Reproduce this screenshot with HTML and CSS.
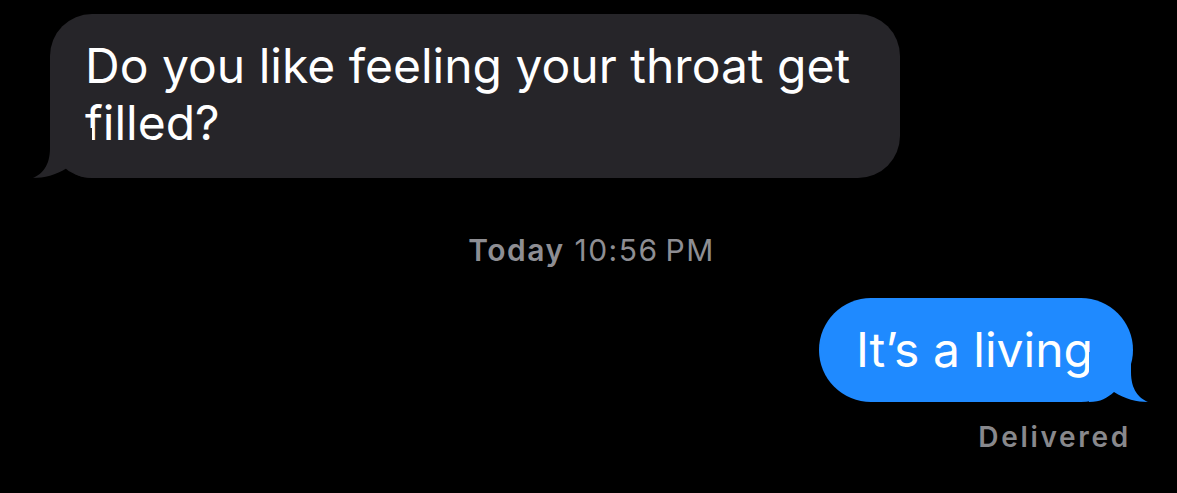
FILE: index.html
```html
<!DOCTYPE html>
<html lang="en">
<head>
  <meta charset="UTF-8" />
  <title>Messages</title>
  <link rel="stylesheet" href="styles.css">
</head>
<body>

<main class="thread">

  <!-- incoming -->
  <div class="row row--in">
    <div class="bubble bubble--in">
      Do you like feeling your throat get filled?
      <svg class="tail tail--in" width="60" height="50" viewBox="0 0 60 50">
        <path d="M18 0 L18 20 C18 38 10 46 1 50 C12 50 24 47 35 40 C42 46 48 50 60 50 L60 0 Z" />
      </svg>
    </div>
  </div>

  <div class="stamp"><span class="stamp__day">Today</span> 10:56&#8239;PM</div>

  <!-- outgoing -->
  <div class="row row--out">
    <div class="bubble bubble--out">
      It’s a living
      <svg class="tail tail--out" width="60" height="50" viewBox="0 0 60 50">
        <path d="M18 0 L18 20 C18 38 10 46 1 50 C12 50 24 47 35 40 C42 46 48 50 60 50 L60 0 Z" />
      </svg>
    </div>
  </div>

  <div class="status">Delivered</div>

</main>

</body>
</html>
```

FILE: styles.css
```css
body {
  margin: 0;
  padding: 0;
  background: #000;
  font-family: Inter, "Noto Sans", sans-serif;
  color: #fff;
  overflow: hidden;
}

.thread {
  display: flex;
  flex-direction: column;
  padding: 14px 44px 0 50px;
}

.row {
  display: flex;
}

.row--out {
  justify-content: flex-end;
  margin-top: 30px;
}

.bubble {
  position: relative;
  font-size: 48px;
  line-height: 57px;
}

.bubble--in {
  width: 780px;
  padding: 23px 35px 27px 35px;
  background: #262529;
  border-radius: 42px;
}

.bubble--out {
  padding: 23px 40px 24px 37px;
  background: #1f8aff;
  border-radius: 52px;
}

/* little tail under the bubble corner */
.tail {
  position: absolute;
  bottom: 0;
}

.tail--in {
  left: -18px;
  fill: #262529;
}

.tail--out {
  right: -16px;
  fill: #1f8aff;
  transform: scaleX(-1);
}

.stamp {
  margin-top: 54px;
  text-align: center;
  font-size: 30px;
  line-height: 36px;
  letter-spacing: 1.5px;
  color: #8e8e93;
}

.stamp__day {
  font-weight: 600;
}

.status {
  align-self: flex-end;
  margin: 19px 2px 0 0;
  font-size: 28px;
  line-height: 32px;
  font-weight: 600;
  letter-spacing: 2.7px;
  color: #88888c;
}
```
